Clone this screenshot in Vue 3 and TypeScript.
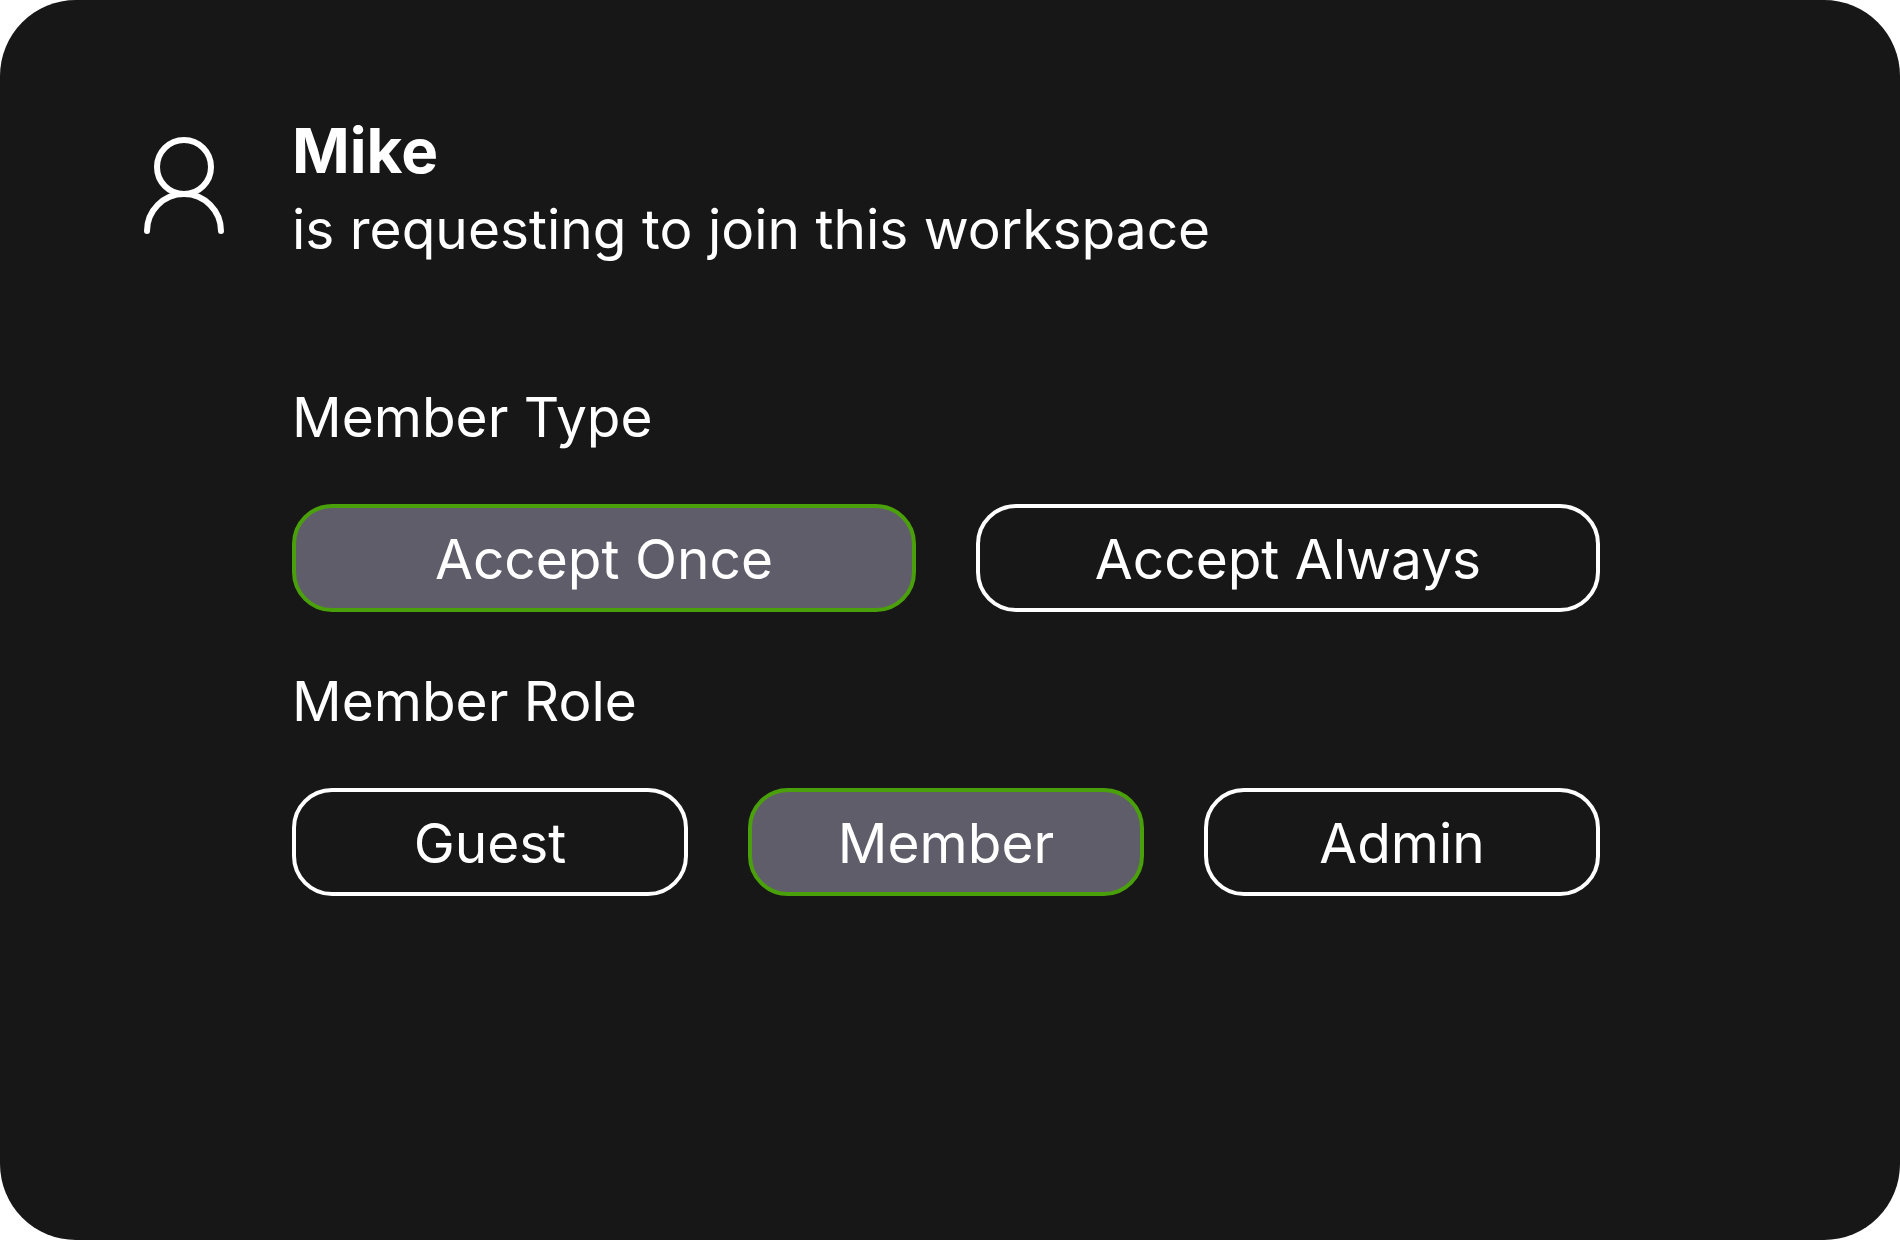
<script setup lang="ts">
import { ref } from 'vue'

const memberTypes: string[] = ['Accept Once', 'Accept Always']
const memberRoles: string[] = ['Guest', 'Member', 'Admin']

const selectedType = ref<string>('Accept Once')
const selectedRole = ref<string>('Member')
</script>

<template>
  <main class="card">
    <svg class="avatar" viewBox="0 0 90 100" fill="none" aria-hidden="true">
      <circle cx="45" cy="31" r="27" />
      <path d="M8 95a37 37 0 0 1 74 0" />
    </svg>
    <div class="content">
      <header class="request">
        <h1 class="name">Mike</h1>
        <p class="message">is requesting to join this workspace</p>
      </header>

      <section class="group" aria-labelledby="type-label">
        <h2 id="type-label" class="label">Member Type</h2>
        <div class="options">
          <button
            v-for="type in memberTypes"
            :key="type"
            type="button"
            class="option"
            :class="{ selected: type === selectedType }"
            :aria-pressed="type === selectedType"
            @click="selectedType = type"
          >
            {{ type }}
          </button>
        </div>
      </section>

      <section class="group" aria-labelledby="role-label">
        <h2 id="role-label" class="label">Member Role</h2>
        <div class="options">
          <button
            v-for="role in memberRoles"
            :key="role"
            type="button"
            class="option"
            :class="{ selected: role === selectedRole }"
            :aria-pressed="role === selectedRole"
            @click="selectedRole = role"
          >
            {{ role }}
          </button>
        </div>
      </section>
    </div>
  </main>
</template>

<style>
body {
  background: #ffffff;
}
</style>

<style scoped>
.card {
  box-sizing: border-box;
  min-height: 100vh;
  display: flex;
  align-items: flex-start;
  gap: 63px;
  padding: 114px 300px 114px 139px;
  border-radius: 76px;
  background: #171717;
  color: #ffffff;
  font-family: 'Inter', 'Liberation Sans', sans-serif;
  font-size: 55px;
  line-height: 74px;
}

.avatar {
  flex: none;
  width: 90px;
  height: 100px;
  margin-top: 22px;
  stroke: #ffffff;
  stroke-width: 6;
  stroke-linecap: round;
}

.content {
  flex: 1;
  min-width: 0;
  display: flex;
  flex-direction: column;
  gap: 52px;
}

.request {
  display: flex;
  flex-direction: column;
  gap: 4px;
  margin-bottom: 62px;
}

.name,
.message,
.label {
  margin: 0;
}

.name {
  font-size: 62px;
  font-weight: 700;
}

.label {
  font-size: 55px;
  font-weight: 400;
}

.group {
  display: flex;
  flex-direction: column;
  gap: 50px;
}

.options {
  display: flex;
  gap: 60px;
}

.option {
  flex: 1 1 0;
  box-sizing: border-box;
  height: 108px;
  padding: 2px 0 0;
  border: 4px solid #ffffff;
  border-radius: 40px;
  background: transparent;
  color: inherit;
  font: inherit;
  cursor: pointer;
}

.option.selected {
  border-color: #4aa00a;
  background: #605d6a;
}
</style>
